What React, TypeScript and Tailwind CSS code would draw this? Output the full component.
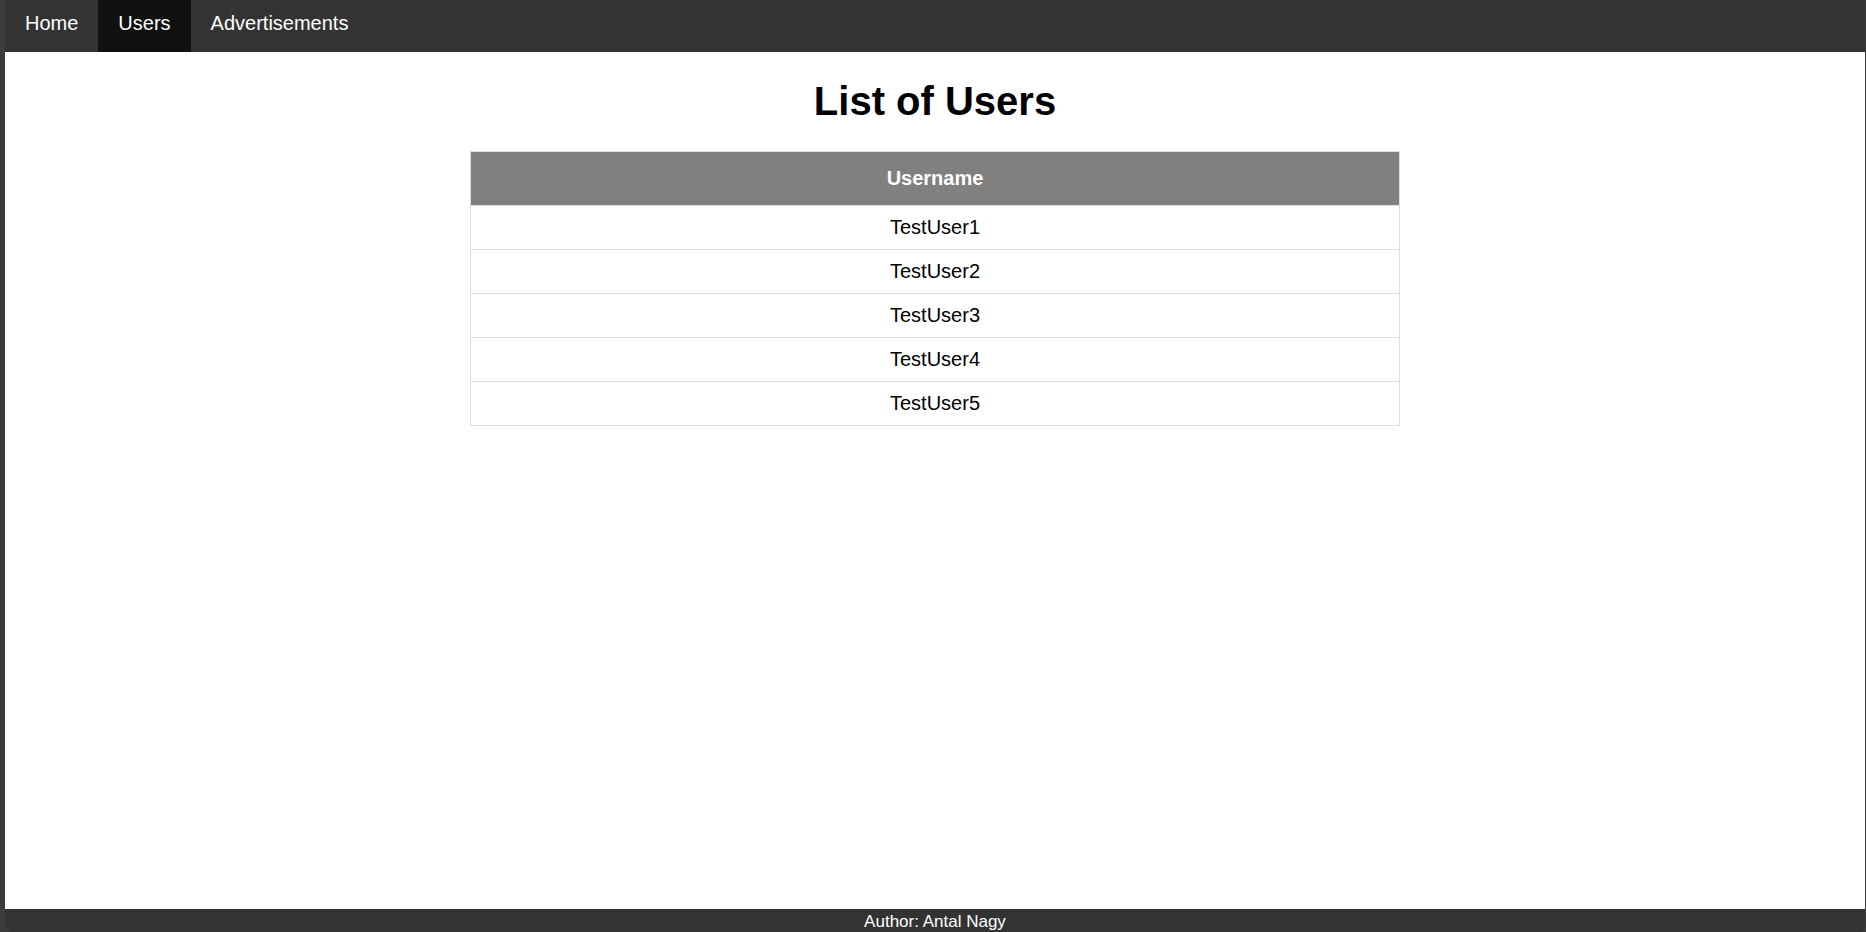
const links = [
  { label: "Home", active: false },
  { label: "Users", active: true },
  { label: "Advertisements", active: false },
];

const users = ["TestUser1", "TestUser2", "TestUser3", "TestUser4", "TestUser5"];

export default function App() {
  return (
    <div className="min-h-screen flex bg-[#3b3b3b] pl-[5px] pr-px font-['Liberation_Sans',Arial,sans-serif] text-xl text-black">
      <div className="flex flex-1 flex-col rounded-b-lg bg-[#333333]">
        <nav className="flex h-[52px] bg-[#333333] text-white">
          {links.map((link) => (
            <a
              key={link.label}
              href="#"
              aria-current={link.active ? "page" : undefined}
              className={
                link.active
                  ? "bg-[#111111] px-5 pt-3 leading-[23px]"
                  : "px-5 pt-3 leading-[23px] hover:bg-[#111111]"
              }
            >
              {link.label}
            </a>
          ))}
        </nav>
        <main className="flex-1 bg-white">
          <h1 className="pt-[26px] text-center text-[40px] leading-[46px] font-bold">List of Users</h1>
          <table className="mx-auto mt-[27px] w-1/2 border-collapse text-center">
            <thead>
              <tr className="h-[54px] bg-[#808080] text-white">
                <th scope="col" className="border border-[#dddddd] leading-[23px] font-bold">
                  Username
                </th>
              </tr>
            </thead>
            <tbody>
              {users.map((user) => (
                <tr key={user} className="h-11">
                  <td className="border border-[#dddddd] leading-[23px]">{user}</td>
                </tr>
              ))}
            </tbody>
          </table>
        </main>
        <footer className="h-[23px] rounded-b-lg bg-[#333333] text-center text-[17px] leading-[25px] text-white">
          Author: Antal Nagy
        </footer>
      </div>
    </div>
  );
}
